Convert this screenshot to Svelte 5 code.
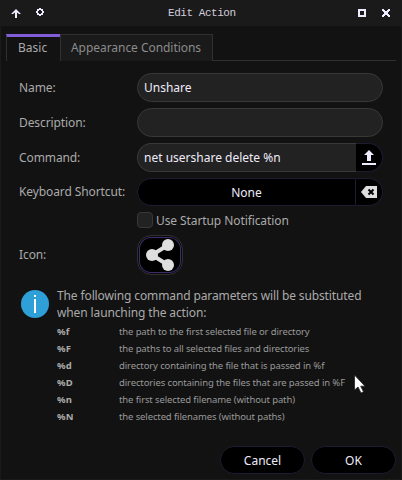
<script>
  const params = [
    ['%f', 'the path to the first selected file or directory'],
    ['%F', 'the paths to all selected files and directories'],
    ['%d', 'directory containing the file that is passed in %f'],
    ['%D', 'directories containing the files that are passed in %F'],
    ['%n', 'the first selected filename (without path)'],
    ['%N', 'the selected filenames (without paths)']
  ];
  let name = $state('Unshare');
  let description = $state('');
  let command = $state('net usershare delete %n');
</script>

<div class="window">
  <header>
    <svg class="up" width="10" height="9" viewBox="0 0 10 9"><path d="M5 0 10 5H8L6 3.5V9H4V3.5L2 5H0z" fill="#f1ebff" /></svg>
    <svg class="pin" width="8" height="8" viewBox="0 0 8 8"><path fill="#f1ebff" fill-rule="evenodd" d="M3 0h2v1h2v2h1v2H7v2H5v1H3V7H1V5H0V3h1V1h2zM3 2v1H2v2h1v1h2V5h1V3H5V2z" /></svg>
    <h1>Edit Action</h1>
    <svg class="max" width="8" height="8" viewBox="0 0 8 8"><path d="M1 1h6v6H1z" fill="none" stroke="#f1ebff" stroke-width="2" /></svg>
    <svg class="close" width="8" height="8" viewBox="0 0 8 8"><path fill="#f1ebff" d="M0 0h2v1h1v1h2V1h1V0h2v2H7v1H6v2h1v1h1v2H6V7H5V6H3v1H2v1H0V6h1V5h1V3H1V2H0z" /></svg>
  </header>

  <nav>
    <div class="tab active">Basic</div>
    <div class="tab other">Appearance Conditions</div>
    <div class="rule"></div>
  </nav>

  <form onsubmit={(e) => e.preventDefault()}>
    <div class="row"><label for="n">Name:</label><input id="n" bind:value={name} /></div>
    <div class="row"><label for="d">Description:</label><input id="d" bind:value={description} /></div>
    <div class="row">
      <label for="c">Command:</label>
      <input id="c" class="joined" bind:value={command} />
      <button type="button" class="end" aria-label="Browse">
        <svg width="14" height="15" viewBox="0 0 14 15"><path d="M7 0 12 5H9v6H5V5H2zM0 13h14v2H0z" fill="#f1ebff" /></svg>
      </button>
    </div>
    <div class="row short">
      <span class="label">Keyboard Shortcut:</span>
      <button type="button" class="shortcut">None</button>
      <button type="button" class="end clear" aria-label="Clear">
        <svg width="16" height="12" viewBox="0 0 16 12"><path d="M5 0h11v12H5L0 6z" fill="#dedede" /><path d="m7.5 3.5 5 5m0-5-5 5" stroke="#000" stroke-width="2" /></svg>
      </button>
    </div>
    <div class="check"><span class="box"></span><span>Use Startup Notification</span></div>
    <div class="iconrow">
      <span class="label">Icon:</span>
      <button type="button" class="icon" aria-label="Icon">
        <svg width="28" height="32" viewBox="0 0 28 32"><path d="M22 6 6 16l16 10" fill="none" stroke="#dedede" stroke-width="4" /><g fill="#dedede"><circle cx="22" cy="6" r="6" /><circle cx="6" cy="16" r="6" /><circle cx="22" cy="26" r="6" /></g></svg>
      </button>
    </div>
  </form>

  <section>
    <svg class="info" width="28" height="28" viewBox="0 0 28 28"><circle cx="14" cy="14" r="14" fill="#2f9fd8" /><path d="M13 5h2v2h-2zM13 9h2v14h-2z" fill="#fff" /></svg>
    <div class="help">
      <p><span>The following command parameters will be substituted</span><br />when launching the action:</p>
      {#each params as [code, text]}
        <div class="param"><b>{code}</b><span>{text}</span></div>
      {/each}
    </div>
  </section>

  <footer><button>Cancel</button><button>OK</button></footer>

  <svg class="cursor" width="14" height="22" viewBox="0 0 14 22"><path d="M1.5 1v15l3.5-3 3 6 2.5-1.2-2.8-5.6H12z" fill="#fff" stroke="#222" stroke-width=".8" /></svg>
</div>

<style>
  .window {
    position: relative;
    box-sizing: border-box;
    width: 402px;
    height: 480px;
    background: #121212;
    border: solid #1a1a1a;
    border-width: 0 1px 1px;
    font: 12px/17px 'Noto Sans', sans-serif;
    color: #aaa;
    overflow: hidden;
    white-space: nowrap;
  }
  svg { display: block; flex: none; }
  header { display: flex; height: 26px; background: #1a1a1a; align-items: flex-start; }
  .up { margin: 9px 0 0 10px; }
  .pin { margin: 8px 0 0 15px; }
  h1 { margin: 5px 0 0 124px; width: 68px; font: 11px/16px 'Liberation Mono', monospace; letter-spacing: -0.45px; color: #d2cddd; }
  .max { margin: 9px 0 0 122px; }
  .close { margin: 9px 0 0 16px; }
  nav { display: flex; margin: 8px 5px 0; height: 27px; }
  .tab { box-sizing: border-box; border: 1px solid #303030; border-bottom: 0; height: 27px; }
  .active { width: 54px; border-top: 3px solid #825dd8; border-right: 0; padding: 2px 0 0 11px; }
  .other { width: 153px; background: #1a1a1a; color: #8b8b8b; padding: 4px 0 0 10px; letter-spacing: -0.05px; }
  .rule { flex: 1; border-bottom: 1px solid #303030; height: 26px; }
  form { padding: 12px 18px 0; }
  .row { display: flex; height: 29px; margin-bottom: 6px; }
  .row.short { height: 28px; }
  label, .label { width: 118px; flex: none; line-height: 28px; letter-spacing: -0.1px; }
  label { line-height: 30px; }
  input { box-sizing: border-box; min-width: 0; flex: 1; border: 1px solid #383838; border-radius: 15px; background: #222; color: #f0ebfa; font: inherit; padding: 0 6px; outline: 0; }
  button { box-sizing: border-box; border: 1px solid #1f1b30; background: #000; color: #f0ebfa; font: inherit; padding: 0; }
  .joined { border-radius: 15px 0 0 15px; border-right: 0; }
  .end { width: 27px; border-left: 0; border-radius: 0 15px 15px 0; display: flex; align-items: center; padding-left: 6px; }
  .clear { padding-left: 5px; }
  .shortcut { flex: 1; border-radius: 15px 0 0 15px; }
  .check { display: flex; align-items: center; height: 16px; margin-left: 118px; gap: 3px; letter-spacing: -0.09px; }
  .box { box-sizing: border-box; width: 16px; height: 16px; border: 1px solid #383838; border-radius: 4px; background: #222; }
  .iconrow { display: flex; margin-top: 7px; align-items: center; height: 40px; }
  .icon { width: 46px; height: 40px; border: 1px solid #303030; border-radius: 14px; display: flex; align-items: center; padding-left: 8px; box-shadow: inset 0 0 0 1px #0a0a0a, inset 0 0 0 2px #3c2b68; }
  section { display: flex; margin: 12px 0 0 20px; }
  .info { margin-top: 3px; }
  .help { margin-left: 8px; letter-spacing: -0.12px; }
  p { margin: 0 0 2px; }
  .param { display: flex; font-size: 9.5px; height: 17px; color: #999; }
  .param b { width: 62px; color: #aaa; letter-spacing: 0.1px; }
  footer { position: absolute; right: 5px; bottom: 5px; display: flex; gap: 6px; }
  footer button { width: 85px; height: 28px; border-radius: 14px; }
  .cursor { position: absolute; left: 352px; top: 374px; }
</style>
